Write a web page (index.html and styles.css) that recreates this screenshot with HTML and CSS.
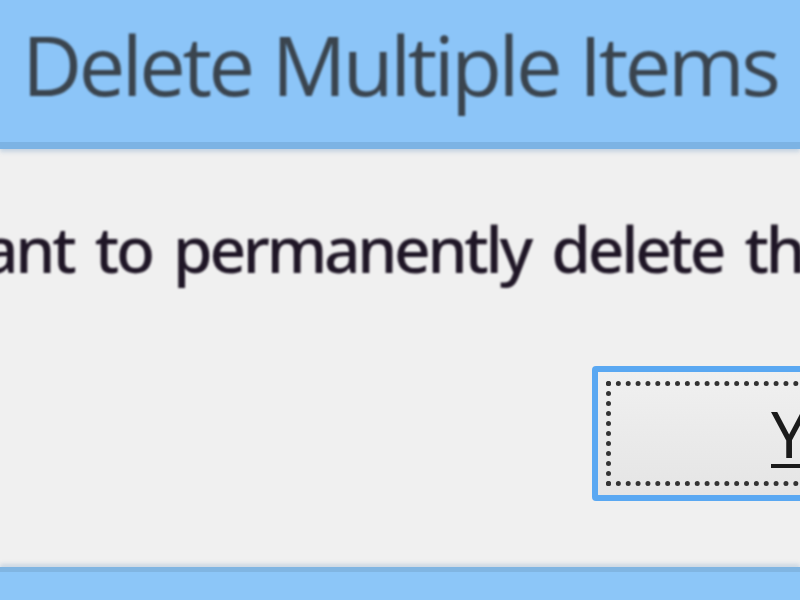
FILE: index.html
```html
<!DOCTYPE html>
<html>
<head>
<meta charset="utf-8">
<link rel="stylesheet" href="styles.css">
</head>
<body>
<div class="dialog">
  <header class="titlebar">
    <h1 class="title">Delete Multiple Items</h1>
  </header>
  <main class="content">
    <p class="message"><span class="clip">Are you sure you w</span>ant to permanently delete these 2 items?</p>
    <div class="buttons">
      <button class="btn"><span class="focus"><span class="label"><u>Y</u>es</span></span></button>
    </div>
  </main>
  <footer class="bottom-edge"></footer>
</div>
</body>
</html>
```
FILE: styles.css
```css
html, body {
  margin: 0;
  padding: 0;
  width: 800px;
  height: 600px;
  overflow: hidden;
  background: #f0f0f0;
}
.dialog {
  width: 800px;
  height: 600px;
  display: flex;
  flex-direction: column;
  overflow: hidden;
}
.titlebar {
  height: 142px;
  flex: none;
  background: #8cc5f8;
  border-bottom: 7px solid #7cb3e4;
  display: flex;
  align-items: flex-start;
  padding-left: 22px;
  box-shadow: 0 3px 4px rgba(120, 160, 200, 0.35);
  position: relative;
  z-index: 1;
}
.title {
  margin: 0;
  padding-top: 9px;
  font-family: "Open Sans", "Noto Sans", sans-serif;
  font-weight: 400;
  font-size: 83px;
  line-height: 110px;
  color: #3a444e;
  white-space: nowrap;
  letter-spacing: -3.5px;
  word-spacing: 2px;
  filter: blur(0.8px);
}
.content {
  flex: 1;
  display: flex;
  flex-direction: column;
  overflow: hidden;
}
.message {
  margin: 55px 0 0 -18px;
  font-family: "Noto Sans", "Open Sans", sans-serif;
  font-size: 64px;
  font-weight: 500;
  line-height: 90px;
  color: #1f1626;
  white-space: nowrap;
  letter-spacing: -3.3px;
  word-spacing: 8px;
  filter: blur(0.8px);
}
.clip {
  display: inline-block;
  width: 0;
  overflow: hidden;
  vertical-align: top;
}
.buttons {
  display: flex;
  justify-content: flex-start;
  padding-left: 592px;
  margin-top: 72px;
}
.btn {
  flex: none;
  width: 400px;
  height: 135px;
  padding: 0;
  margin: 0;
  border: 6px solid #5aa8f2;
  border-radius: 4px;
  background: linear-gradient(#f0f0f0, #e5e5e5);
  display: flex;
  box-sizing: border-box;
  filter: blur(0.6px);
}
.focus {
  flex: 1;
  margin: 9px 0 9px 8px;
  border: 5px dotted #333;
  display: flex;
  align-items: center;
  padding-left: 160px;
}
.label {
  font-family: "Noto Sans", "Open Sans", sans-serif;
  font-size: 64px;
  color: #1a1a1a;
}
.label u {
  text-decoration-thickness: 4px;
  text-underline-offset: 6px;
}
.bottom-edge {
  flex: none;
  height: 28px;
  background: #8cc6f8;
  border-top: 5px solid #80b5e2;
  box-shadow: 0 -3px 4px rgba(120, 160, 200, 0.3);
}
```
